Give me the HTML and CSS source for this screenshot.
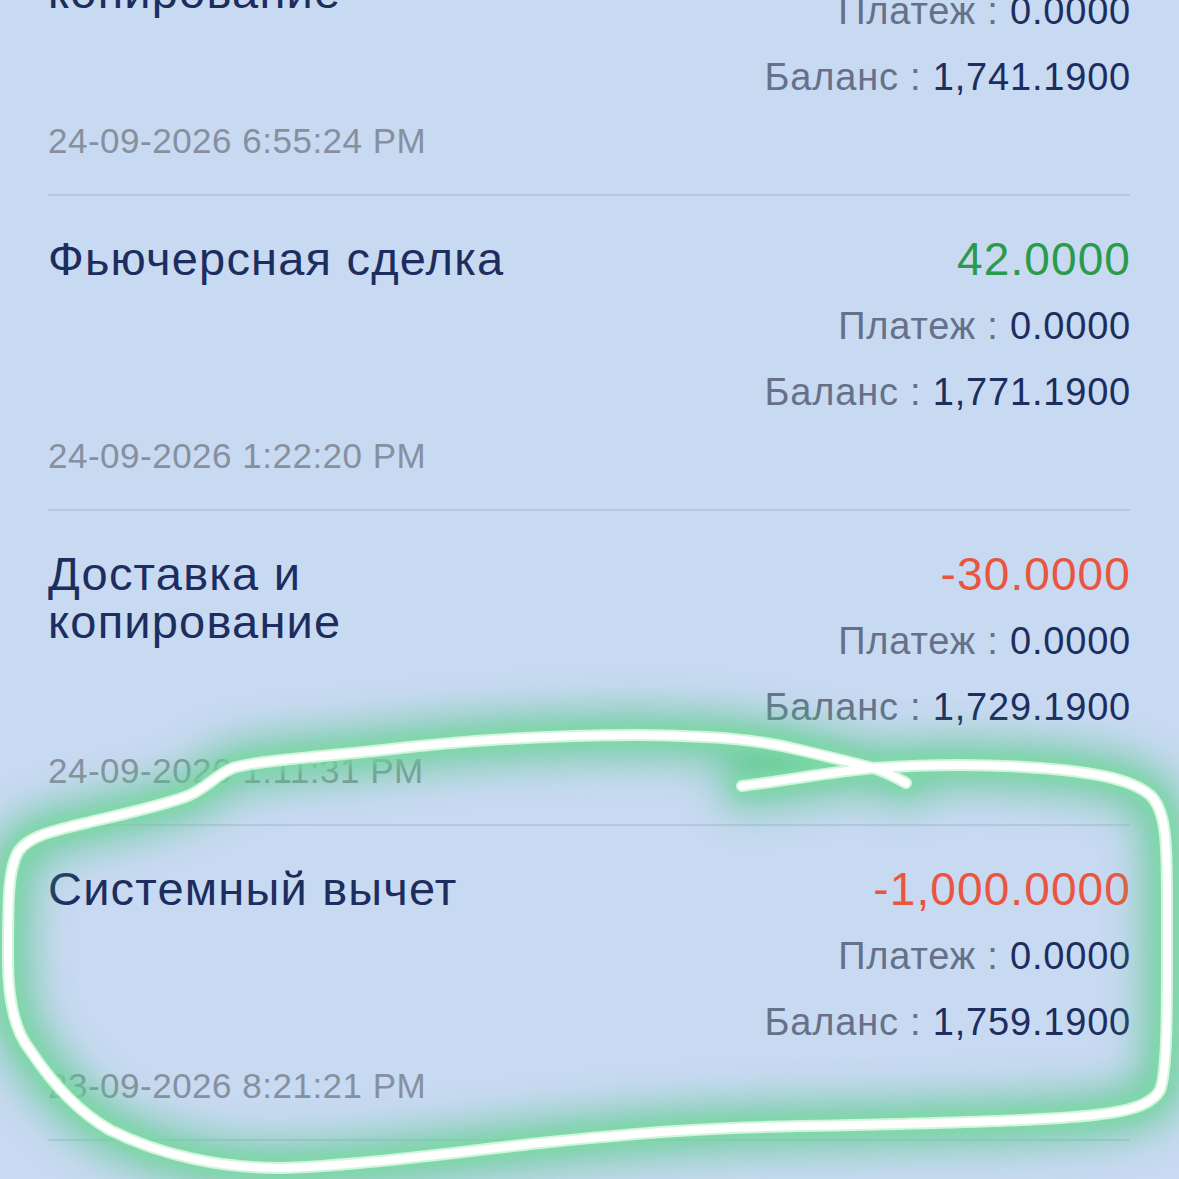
FILE: index.html
```html
<!DOCTYPE html>
<html lang="ru">
<head>
<meta charset="utf-8">
<title>История</title>
<link rel="stylesheet" href="styles.css">
</head>
<body>
<div class="screen">
  <ul class="list">
    <li class="item">
      <div class="main">
        <div class="title">Доставка и копирование</div>
        <div class="figures">
          <div class="amount neg">-30.0000</div>
          <div class="sub"><span class="label">Платеж : </span><span class="val">0.0000</span></div>
          <div class="sub"><span class="label">Баланс : </span><span class="val">1,741.1900</span></div>
        </div>
      </div>
      <div class="date">24-09-2026 6:55:24 PM</div>
    </li>
    <li class="item">
      <div class="main">
        <div class="title">Фьючерсная сделка</div>
        <div class="figures">
          <div class="amount pos">42.0000</div>
          <div class="sub"><span class="label">Платеж : </span><span class="val">0.0000</span></div>
          <div class="sub"><span class="label">Баланс : </span><span class="val">1,771.1900</span></div>
        </div>
      </div>
      <div class="date">24-09-2026 1:22:20 PM</div>
    </li>
    <li class="item">
      <div class="main">
        <div class="title">Доставка и копирование</div>
        <div class="figures">
          <div class="amount neg">-30.0000</div>
          <div class="sub"><span class="label">Платеж : </span><span class="val">0.0000</span></div>
          <div class="sub"><span class="label">Баланс : </span><span class="val">1,729.1900</span></div>
        </div>
      </div>
      <div class="date">24-09-2026 1:11:31 PM</div>
    </li>
    <li class="item">
      <div class="main">
        <div class="title">Системный вычет</div>
        <div class="figures">
          <div class="amount neg">-1,000.0000</div>
          <div class="sub"><span class="label">Платеж : </span><span class="val">0.0000</span></div>
          <div class="sub"><span class="label">Баланс : </span><span class="val">1,759.1900</span></div>
        </div>
      </div>
      <div class="date">23-09-2026 8:21:21 PM</div>
    </li>
    <li class="item">
      <div class="main">
        <div class="title">Фьючерсная сделка</div>
        <div class="figures">
          <div class="amount pos">0.0000</div>
        </div>
      </div>
    </li>
  </ul>

  <svg class="mark" width="1179" height="1179" viewBox="0 0 1179 1179" aria-hidden="true">
    <defs>
      <filter id="glow" x="-10%" y="-20%" width="120%" height="140%">
        <feGaussianBlur stdDeviation="20"/>
      </filter>
      <filter id="soft" x="-10%" y="-20%" width="120%" height="140%">
        <feGaussianBlur stdDeviation="6"/>
      </filter>
      <path id="loop" d="M906 783 C892 775 880 770 873 768 C850 762 830 757 800 750 C760 740 720 736 640 735 C540 735 450 742 383 750 C320 757 260 760 233 768 C215 775 205 790 185 797 C160 806 120 815 90 822 C55 830 28 836 18 852 C8 870 8 900 8 960 C8 1000 14 1030 30 1050 C50 1080 75 1110 110 1130 C160 1155 220 1168 280 1168 C360 1166 470 1150 560 1141 C640 1133 700 1128 800 1126 C900 1124 1000 1122 1060 1118 C1120 1114 1150 1108 1160 1090 C1168 1070 1167 1000 1167 900 C1167 840 1166 810 1150 795 C1130 778 1090 772 1040 768 C990 764 930 764 873 768 C830 772 790 780 742 786"/>
    </defs>
    <g fill="none" stroke-linecap="round" stroke-linejoin="round">
      <use href="#loop" class="stroke-glow" filter="url(#glow)"/>
      <use href="#loop" class="stroke-halo" filter="url(#soft)"/>
      <use href="#loop" class="stroke-rim"/>
      <use href="#loop" class="stroke-core"/>
    </g>
  </svg>
</div>
</body>
</html>
```

FILE: styles.css
```css
* {
  box-sizing: border-box;
}

html, body {
  margin: 0;
  padding: 0;
  background: #c8d9f2;
}

body {
  font-family: "Liberation Sans", Arial, Helvetica, sans-serif;
  color: #1c2b5c;
}

.screen {
  position: relative;
  width: 1179px;
  height: 1179px;
  overflow: hidden;
  background: #c8d9f2;
}

.list {
  list-style: none;
  margin: -119px 0 0;
  padding: 0 49px 0 48px;
}

.item {
  padding: 39px 0 33px;
  border-bottom: 2px solid #b5c7e3;
}

.main {
  display: flex;
  justify-content: space-between;
  align-items: flex-start;
}

.title {
  max-width: 500px;
  font-size: 47px;
  line-height: 48px;
  letter-spacing: 1.2px;
  color: #1d2d5e;
}

.figures {
  text-align: right;
  white-space: nowrap;
  margin-right: -1px;
}

.amount {
  font-size: 46px;
  line-height: 48px;
  letter-spacing: 1.1px;
}

.amount.pos {
  color: #2b9a4b;
}

.amount.neg {
  color: #e9553f;
}

.sub {
  font-size: 38px;
  line-height: 66px;
  letter-spacing: 0.8px;
}

.amount + .sub {
  margin-top: 10px;
}

.label {
  color: #667189;
}

.val {
  color: #1d2d5e;
}

.date {
  margin-top: 11px;
  font-size: 35px;
  line-height: 40px;
  letter-spacing: 0.5px;
  color: #86909f;
}

.mark {
  position: absolute;
  left: 0;
  top: 0;
  pointer-events: none;
}

.stroke-glow {
  stroke: #55c987;
  stroke-width: 44;
  opacity: 0.8;
}

.stroke-halo {
  stroke: #7fdca5;
  stroke-width: 20;
  opacity: 0.85;
}

.stroke-rim {
  stroke: #d2f5df;
  stroke-width: 12;
}

.stroke-core {
  stroke: #ffffff;
  stroke-width: 8;
}
```
